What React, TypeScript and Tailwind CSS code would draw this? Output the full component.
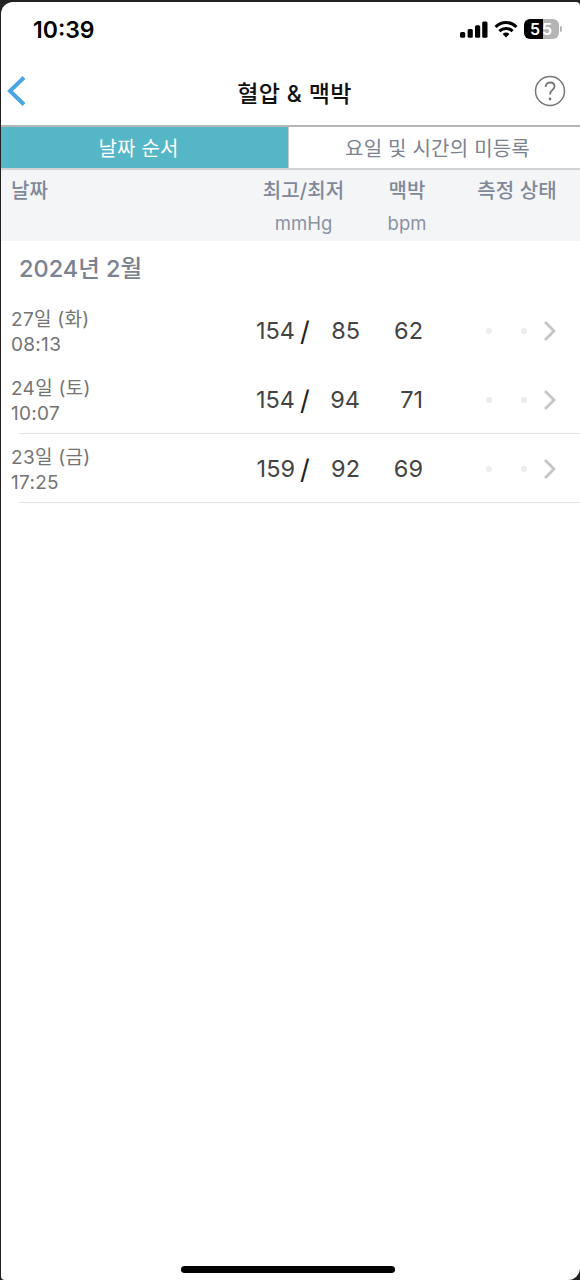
import type { ReactNode } from "react";

interface Reading {
  date: string;
  time: string;
  systolic: number;
  diastolic: number;
  pulse: number;
  divider: boolean;
}

const readings: Reading[] = [
  { date: "27일 (화)", time: "08:13", systolic: 154, diastolic: 85, pulse: 62, divider: false },
  { date: "24일 (토)", time: "10:07", systolic: 154, diastolic: 94, pulse: 71, divider: true },
  { date: "23일 (금)", time: "17:25", systolic: 159, diastolic: 92, pulse: 69, divider: true },
];

function StatusBar() {
  return (
    <div className="flex h-[54px] items-center justify-between pl-8 pr-[18px]">
      <span className="pt-[2px] text-[23px] font-semibold leading-none text-black">10:39</span>
      <div className="flex items-center">
        <svg className="h-[18px] w-7" viewBox="0 0 28 18" fill="#000">
          <rect x="0" y="12" width="5.2" height="5.8" rx="1.5" />
          <rect x="7.6" y="9" width="5.2" height="8.8" rx="1.5" />
          <rect x="15" y="5.3" width="5.2" height="12.5" rx="1.5" />
          <rect x="22.2" y="1.5" width="5.3" height="16.3" rx="1.5" />
        </svg>
        <svg className="ml-[6px] h-[18px] w-6" viewBox="0 0 24 18" fill="none" stroke="#000" strokeWidth="3.1">
          <path d="M1.6 7C7.5 1 16.5 1 22.4 7" />
          <path d="M5.4 11.2C9.2 7.6 14.8 7.6 18.6 11.2" />
          <path d="M12 17.5L8.6 14Q12 11.2 15.4 14Z" fill="#000" stroke="none" />
        </svg>
        <div className="ml-[6px] flex h-5 w-[35px] overflow-hidden rounded-[6px] bg-[linear-gradient(90deg,#000_53%,#b5b5b5_53%)] text-[16px] font-semibold leading-5 text-white">
          <span className="w-[17px] pl-[6px]">5</span>
          <span className="pl-px">5</span>
        </div>
        <div className="ml-px h-[6px] w-[2px] rounded-r-full bg-[#b5b5b5]" />
      </div>
    </div>
  );
}

function NavBar() {
  return (
    <div className="flex h-[69px] items-center justify-between pl-[5px] pr-[14px]">
      <svg className="h-8 w-[20px]" viewBox="0 0 20 32" fill="none" stroke="#4aa6e3" strokeWidth="4">
        <path d="M18 2.5L4 16L18 29.5" />
      </svg>
      <h1 className="ml-[29px] mt-[7px] whitespace-nowrap text-[23px] font-medium leading-8 tracking-[0.4px] text-[#111]">
        혈압 &amp; 맥박
      </h1>
      <svg className="h-8 w-8" viewBox="0 0 32 32" fill="none" stroke="#777" strokeWidth="1.5">
        <circle cx="16" cy="16" r="14.5" />
        <path d="M11.6 12.1C11.6 9.3 13.4 7.5 16.1 7.5C18.7 7.5 20.5 9.2 20.5 11.6C20.5 14.8 16 15.2 16 19.5" strokeWidth="1.8" />
        <circle cx="16" cy="24" r="1.4" fill="#777" stroke="none" />
      </svg>
    </div>
  );
}

function HeaderCell({ className, unit, children }: { className: string; unit?: string; children: ReactNode }) {
  return (
    <div className={className}>
      <div className="whitespace-nowrap pt-px text-[20px] font-medium leading-10 tracking-[0.1px]">{children}</div>
      {unit && <div className="text-[18.5px] leading-[25px] text-[#8b93a3]">{unit}</div>}
    </div>
  );
}

function ReadingRow({ reading }: { reading: Reading }) {
  return (
    <div className="flex h-[69px] flex-col">
      <div className="flex h-[67px] items-center">
        <div className="w-[214px] pl-[10px] pt-[2px] text-[19px] leading-[25px] tracking-[0.3px] text-[#747474]">
          <div>{reading.date}</div>
          <div>{reading.time}</div>
        </div>
        <div className="flex items-center pt-px text-[23.5px] leading-none text-[#444]">
          <span className="w-20 text-right">{reading.systolic}</span>
          <span className="ml-[5px] w-[10px] text-[27px] text-[#222]">/</span>
          <span className="w-[50px] text-right">{reading.diastolic}</span>
          <span className="w-[63px] text-right">{reading.pulse}</span>
        </div>
        <div className="ml-[63px] flex items-center">
          <span className="size-[6px] rounded-full bg-[#ececf1]" />
          <span className="ml-[29px] size-[6px] rounded-full bg-[#ececf1]" />
          <svg className="ml-[17px] h-5 w-3" viewBox="0 0 12 20" fill="none" stroke="#c5c5c7" strokeWidth="2.8">
            <path d="M1 1L10 10L1 19" />
          </svg>
        </div>
      </div>
      {reading.divider && <div className="ml-[18px] h-px bg-[#e6e6e8]" />}
    </div>
  );
}

export default function App() {
  return (
    <div className="h-[1280px] w-[580px] bg-[#242122] pl-px pt-[2px] font-['Inter','Noto_Sans_CJK_KR',sans-serif]">
      <div className="flex h-[1278px] flex-col overflow-hidden rounded-bl-[4px] rounded-br-[12px] rounded-tl-[12px] rounded-tr-[4px] bg-white">
        <StatusBar />
        <NavBar />
        <div className="flex h-[45px] border-b-2 border-t-2 border-b-[#d2d3d5] border-t-[#b5b5b5] text-[20px] leading-[44px]">
          <div className="h-[41px] w-[287px] bg-[#55b6c8] pr-3 text-center tracking-[0.2px] text-white">날짜 순서</div>
          <div className="h-[41px] flex-1 border-l border-[#c8c8c8] pl-[6px] text-center tracking-[0.2px] text-[#7c8290]">
            요일 및 시간의 미등록
          </div>
        </div>
        <div className="flex h-[71px] bg-[#f4f5f7] text-[#818999]">
          <HeaderCell className="w-[243px] pl-[10px]">날짜</HeaderCell>
          <HeaderCell className="w-[119px] text-center" unit="mmHg">최고/최저</HeaderCell>
          <HeaderCell className="w-[88px] text-center" unit="bpm">맥박</HeaderCell>
          <HeaderCell className="flex-1 pl-[3px] text-center">측정 상태</HeaderCell>
        </div>
        <h2 className="h-[56px] pl-[18px] pt-px text-[23.5px] font-medium leading-[54px] text-[#7b8291]">
          2024년 2월
        </h2>
        {readings.map((reading) => (
          <ReadingRow key={reading.date} reading={reading} />
        ))}
        <div className="mx-auto mb-[7px] mt-auto h-[7px] w-[214px] -translate-x-[3px] rounded-full bg-black" />
      </div>
    </div>
  );
}
